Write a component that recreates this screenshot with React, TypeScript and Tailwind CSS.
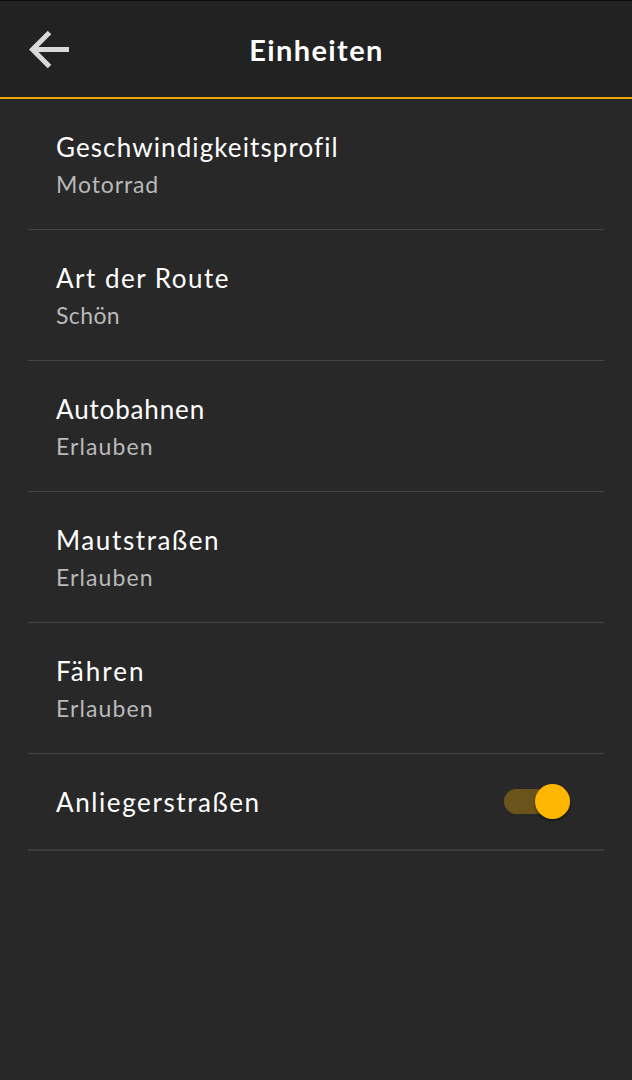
interface Setting {
  label: string;
  labelClass: string;
  value: string;
  valueClass: string;
}

const settings: Setting[] = [
  { label: "Geschwindigkeitsprofil", labelClass: "tracking-[1.1px]", value: "Motorrad", valueClass: "tracking-[0.9px]" },
  { label: "Art der Route", labelClass: "tracking-[1.5px]", value: "Schön", valueClass: "tracking-[0.4px]" },
  { label: "Autobahnen", labelClass: "tracking-[0.85px]", value: "Erlauben", valueClass: "tracking-[1.1px]" },
  { label: "Mautstraßen", labelClass: "tracking-[1.6px]", value: "Erlauben", valueClass: "tracking-[1.1px]" },
  { label: "Fähren", labelClass: "tracking-[2px]", value: "Erlauben", valueClass: "tracking-[1.1px]" },
];

function BackArrow() {
  return (
    <svg width="40" height="38" viewBox="0 0 40 38" fill="none" stroke="#d9d9d9" strokeWidth="5">
      <path d="M40 19.5H5M20.5 2.5l-17 17 17 17" />
    </svg>
  );
}

function Header() {
  return (
    <header className="grid h-[99px] grid-cols-[1fr_auto_1fr] items-center border-t border-b-2 border-t-[#0c0c0c] border-b-[#eba500] bg-[#222222] px-[29px]">
      <button type="button" aria-label="Zurück" className="justify-self-start">
        <BackArrow />
      </button>
      <h1 className="pt-0.5 pl-px text-[29px] leading-9 font-bold tracking-[1.4px] whitespace-nowrap text-white">Einheiten</h1>
      <span />
    </header>
  );
}

function SettingRow({ label, labelClass, value, valueClass }: Setting) {
  return (
    <li className="h-[131px] border-b border-[#444444] px-7 pt-[30px] whitespace-nowrap">
      <p className={`text-[26px] leading-9 text-white ${labelClass}`}>{label}</p>
      <p className={`text-[23px] leading-[38px] text-[#b9b9b9] ${valueClass}`}>{value}</p>
    </li>
  );
}

function Toggle() {
  return (
    <button type="button" role="switch" aria-checked="true" className="flex h-[25px] w-[66px] items-center justify-end rounded-full bg-[#6b541c]">
      <span className="size-[35px] shrink-0 rounded-full bg-[#ffb600] shadow-[0_2px_3px_rgba(0,0,0,0.4)]" />
    </button>
  );
}

export default function App() {
  return (
    <div className="min-h-[1080px] w-full bg-[#282828] font-['Lato','Open_Sans',sans-serif]">
      <Header />
      <ul className="px-7">
        {settings.map((setting) => (
          <SettingRow key={setting.label} {...setting} />
        ))}
        <li className="flex h-[97px] items-center justify-between border-b-2 border-[#3c3c3c] pr-[34px] pl-7">
          <p className="text-[26px] leading-9 tracking-[1.6px] text-white">Anliegerstraßen</p>
          <Toggle />
        </li>
      </ul>
    </div>
  );
}
